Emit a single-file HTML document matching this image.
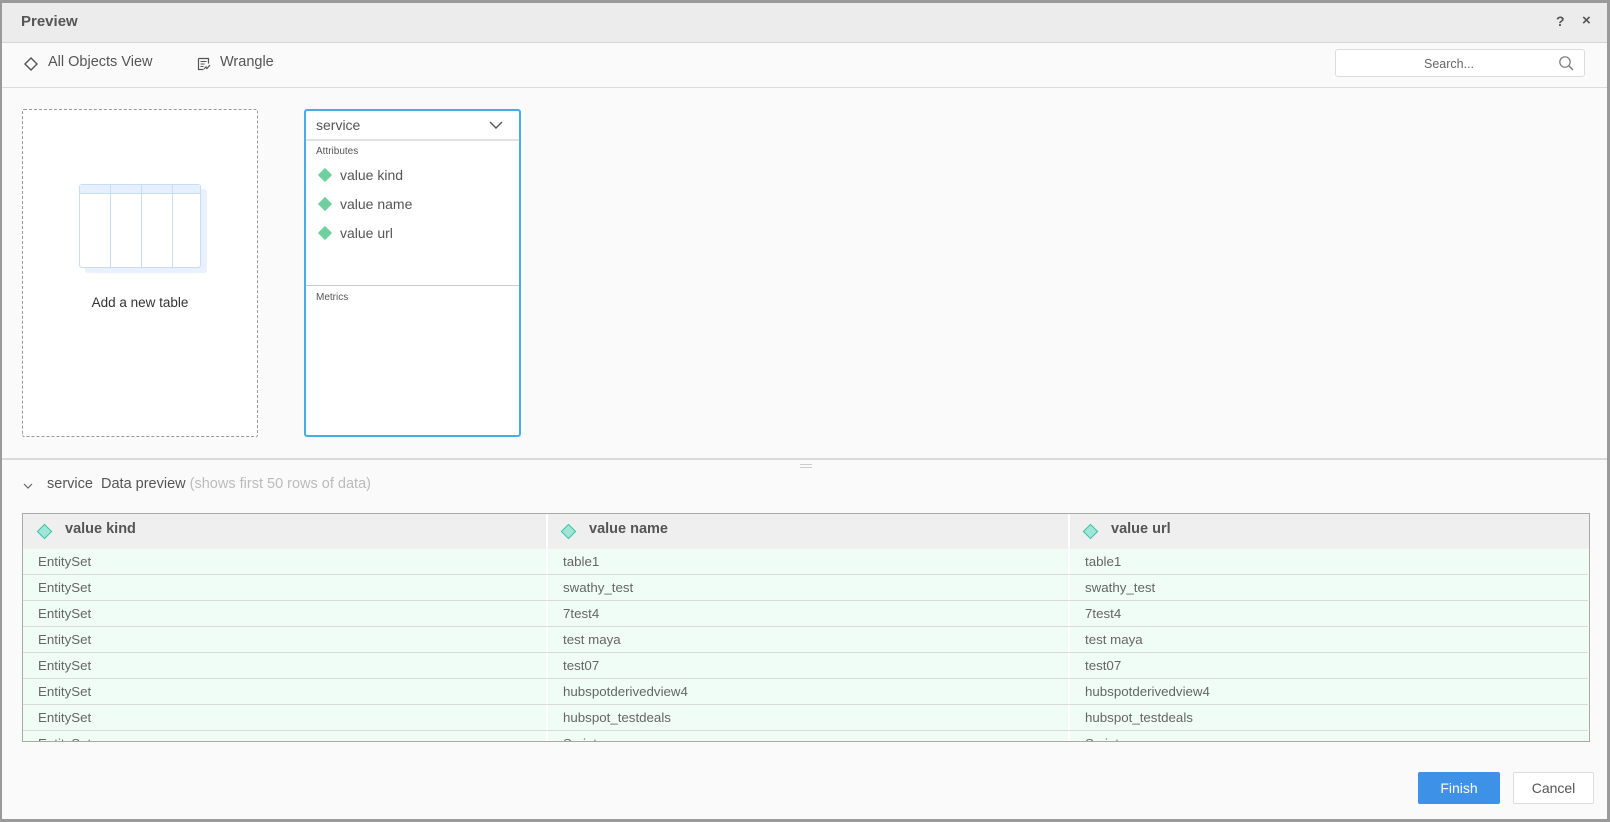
<!DOCTYPE html>
<html><head><meta charset="utf-8"><style>
*{box-sizing:border-box;margin:0;padding:0}
body{width:1610px;height:822px;overflow:hidden;font-family:"Liberation Sans",Arial,sans-serif;background:#9a9a9a;position:relative}
.abs{position:absolute}
#dlg{position:absolute;left:2px;top:3px;width:1605px;height:816px;background:#fafafa}
.title{left:0;top:0;width:1605px;height:40px;background:#ececec;border-bottom:1px solid #d6d6d6}
.tb{left:0;top:40px;width:1605px;height:45px;border-bottom:1px solid #dcdcdc;background:#fafafa}
.t{font-size:14px;color:#555;white-space:nowrap}
.row{position:absolute;left:0;height:26px;width:1565px;border-bottom:1px solid #d9dcdb}
.c{position:absolute;top:0;height:25px;background:#effdf6;font-size:13.3px;color:#666;line-height:25px;padding-left:15px}
</style></head><body>
<div id="dlg">
 <div class="abs title"><div class="abs" style="left:19px;top:10px;font-size:15px;font-weight:bold;color:#555">Preview</div>
 <div class="abs" style="left:1554px;top:10px;font-size:14px;font-weight:bold;color:#555">?</div>
 <div class="abs" style="left:1580px;top:9px;font-size:15px;font-weight:bold;color:#555">×</div></div>
 <div class="abs tb">
  <svg class="abs" style="left:21px;top:13px" width="16" height="16"><path d="M8 2 L14 8 L8 14 L2 8 Z" fill="none" stroke="#555" stroke-width="1.4"/></svg>
  <div class="abs t" style="left:46px;top:11px;font-size:14.5px">All Objects View</div>
  <svg class="abs" style="left:194px;top:13px" width="16" height="16"><path d="M2.5 2.5h10v5M2.5 2.5v11h5" fill="none" stroke="#555" stroke-width="1.2"/><path d="M4.5 5.5h6M4.5 8h4M4.5 10.5h3" stroke="#555" stroke-width="1"/><path d="M8 13 L10 11 L11 12.5 L14 9" fill="none" stroke="#555" stroke-width="1.2"/></svg>
  <div class="abs t" style="left:218px;top:11px;font-size:14.5px">Wrangle</div>
  <div class="abs" style="left:1333px;top:6px;width:250px;height:28px;background:#fff;border:1px solid #dcdcdc;border-radius:3px">
   <div class="abs" style="left:88px;top:7px;font-size:12.5px;color:#666">Search...</div>
   <svg class="abs" style="left:222px;top:5px" width="16" height="16"><circle cx="7" cy="7" r="5.2" fill="none" stroke="#777" stroke-width="1.2"/><path d="M11 11l4 4" stroke="#777" stroke-width="1.3"/></svg>
  </div>
 </div>
 <!-- dashed card -->
 <div class="abs" style="left:20px;top:106px;width:236px;height:328px;border:1px dashed #999;background:#fff;border-radius:2px">
  <div class="abs" style="left:62px;top:79px;width:122px;height:84px;background:#e8f1fd;border-radius:3px"></div>
  <div class="abs" style="left:56px;top:74px;width:122px;height:84px;background:#fff;border:1px solid #c9dcf5;border-radius:3px">
   <div class="abs" style="left:0;top:0;width:120px;height:9px;background:#e4efff;border-bottom:1px solid #c9dcf5"></div>
   <div class="abs" style="left:30px;top:0;width:1px;height:82px;background:#c9dcf5"></div>
   <div class="abs" style="left:61px;top:0;width:1px;height:82px;background:#c9dcf5"></div>
   <div class="abs" style="left:92px;top:0;width:1px;height:82px;background:#c9dcf5"></div>
  </div>
  <div class="abs" style="left:0;width:234px;top:185px;text-align:center;font-size:13.5px;color:#333">Add a new table</div>
 </div>
 <!-- service card -->
 <div class="abs" style="left:302px;top:106px;width:217px;height:328px;border:2px solid #45aee8;background:#fff;border-radius:3px">
  <div class="abs t" style="left:10px;top:6px;font-size:14px">service</div>
  <svg class="abs" style="left:183px;top:9px" width="14" height="10"><path d="M1 2l6 6 6-6" fill="none" stroke="#555" stroke-width="1.4"/></svg>
  <div class="abs" style="left:0;top:28px;width:213px;height:2px;background:#e2e2e2"></div>
  <div class="abs" style="left:10px;top:35px;font-size:10px;color:#555">Attributes</div>
  <div class="abs" style="left:12px;top:56px">
   <div style="height:29px;position:relative"><span class="abs" style="left:2px;top:3px;width:10px;height:10px;background:#6fcf9f;transform:rotate(45deg)"></span><span class="abs t" style="left:22px;top:0;font-size:14px">value kind</span></div>
   <div style="height:29px;position:relative"><span class="abs" style="left:2px;top:3px;width:10px;height:10px;background:#6fcf9f;transform:rotate(45deg)"></span><span class="abs t" style="left:22px;top:0;font-size:14px">value name</span></div>
   <div style="height:29px;position:relative"><span class="abs" style="left:2px;top:3px;width:10px;height:10px;background:#6fcf9f;transform:rotate(45deg)"></span><span class="abs t" style="left:22px;top:0;font-size:14px">value url</span></div>
  </div>
  <div class="abs" style="left:0;top:174px;width:213px;height:1px;background:#ccc"></div>
  <div class="abs" style="left:10px;top:181px;font-size:10px;color:#555">Metrics</div>
 </div>
 <div class="abs" style="left:0;top:455px;width:1605px;height:2px;background:#dadada"></div>
 <div class="abs" style="left:798px;top:461px;width:12px;height:1px;background:#ccc"></div>
 <div class="abs" style="left:798px;top:464px;width:12px;height:1px;background:#ccc"></div>
 <svg class="abs" style="left:21px;top:479px" width="10" height="8"><path d="M1 2l4 4 4-4" fill="none" stroke="#666" stroke-width="1.2"/></svg>
 <div class="abs t" style="left:45px;top:473px;font-size:14.5px"><span>service</span>&nbsp; <span>Data preview</span> <span style="color:#bbb">(shows first 50 rows of data)</span></div>
 <!-- table -->
 <div class="abs" style="left:20px;top:510px;width:1568px;height:229px;border:1px solid #a9a9a9;background:#fff;overflow:hidden">
  <div class="abs" style="left:0;top:0;width:1566px;height:35px;background:#efefef"></div>
  <div class="abs" style="left:523px;top:0;width:2px;height:227px;background:#fff"></div>
  <div class="abs" style="left:1045px;top:0;width:2px;height:227px;background:#fff"></div>
  <div class="abs" style="left:16px;top:12px;width:11px;height:11px;border:1.5px solid #3cc2a6;background:#9fe6d6;transform:rotate(45deg)"></div>
  <div class="abs" style="left:42px;top:7px;font-size:14.5px;font-weight:bold;color:#555">value kind</div>
  <div class="abs" style="left:540px;top:12px;width:11px;height:11px;border:1.5px solid #3cc2a6;background:#9fe6d6;transform:rotate(45deg)"></div>
  <div class="abs" style="left:566px;top:7px;font-size:14.5px;font-weight:bold;color:#555">value name</div>
  <div class="abs" style="left:1062px;top:12px;width:11px;height:11px;border:1.5px solid #3cc2a6;background:#9fe6d6;transform:rotate(45deg)"></div>
  <div class="abs" style="left:1088px;top:7px;font-size:14.5px;font-weight:bold;color:#555">value url</div>
  <div class="row" style="top:35px"><div class="c" style="left:0;width:523px">EntitySet</div><div class="c" style="left:525px;width:520px">table1</div><div class="c" style="left:1047px;width:519px">table1</div></div>
  <div class="row" style="top:61px"><div class="c" style="left:0;width:523px">EntitySet</div><div class="c" style="left:525px;width:520px">swathy_test</div><div class="c" style="left:1047px;width:519px">swathy_test</div></div>
  <div class="row" style="top:87px"><div class="c" style="left:0;width:523px">EntitySet</div><div class="c" style="left:525px;width:520px">7test4</div><div class="c" style="left:1047px;width:519px">7test4</div></div>
  <div class="row" style="top:113px"><div class="c" style="left:0;width:523px">EntitySet</div><div class="c" style="left:525px;width:520px">test maya</div><div class="c" style="left:1047px;width:519px">test maya</div></div>
  <div class="row" style="top:139px"><div class="c" style="left:0;width:523px">EntitySet</div><div class="c" style="left:525px;width:520px">test07</div><div class="c" style="left:1047px;width:519px">test07</div></div>
  <div class="row" style="top:165px"><div class="c" style="left:0;width:523px">EntitySet</div><div class="c" style="left:525px;width:520px">hubspotderivedview4</div><div class="c" style="left:1047px;width:519px">hubspotderivedview4</div></div>
  <div class="row" style="top:191px"><div class="c" style="left:0;width:523px">EntitySet</div><div class="c" style="left:525px;width:520px">hubspot_testdeals</div><div class="c" style="left:1047px;width:519px">hubspot_testdeals</div></div>
  <div class="row" style="top:217px"><div class="c" style="left:0;width:523px">EntitySet</div><div class="c" style="left:525px;width:520px">Scripts</div><div class="c" style="left:1047px;width:519px">Scripts</div></div>
 </div>
 <div class="abs" style="left:1416px;top:769px;width:82px;height:32px;background:#3d92e8;border-radius:2px;color:#fff;font-size:14px;text-align:center;line-height:32px">Finish</div>
 <div class="abs" style="left:1511px;top:769px;width:81px;height:32px;background:#fff;border:1px solid #ddd;border-radius:2px;color:#555;font-size:14px;text-align:center;line-height:30px">Cancel</div>
</div>
</body></html>
